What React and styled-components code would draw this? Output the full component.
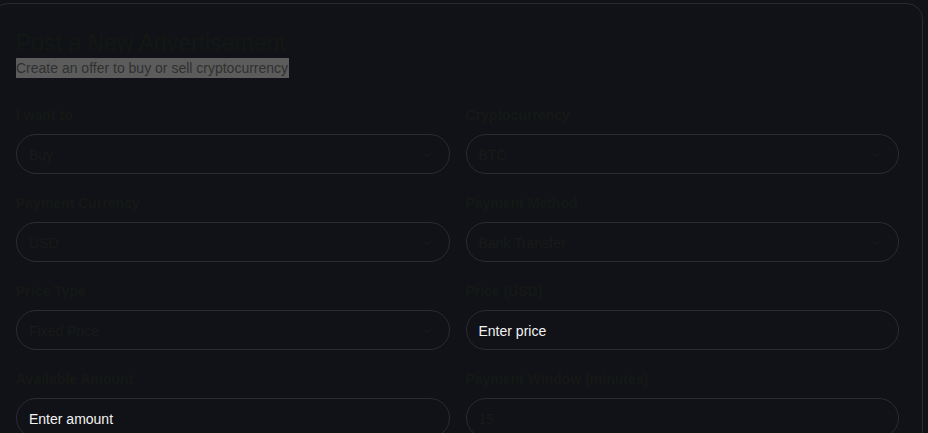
import React from 'react';
import styled, { createGlobalStyle } from 'styled-components';

const GlobalStyle = createGlobalStyle`
    html, body {
        margin: 0;
        padding: 0;
        background: #111217;
        overflow: hidden;
    }
    body {
        font-family: "Liberation Sans", Arial, sans-serif;
    }
`;

const Card = styled.div`
    margin: 3px 5px 0 -8px;
    padding: 24px 23px 24px 23px;
    border: 1px solid #2a2b30;
    border-radius: 16px;
    background: #111217;
    min-height: 600px;
`;

const Title = styled.h1`
    margin: 0;
    font-size: 23px;
    font-weight: 400;
    line-height: 30px;
    color: #131813;
`;

const Subtitle = styled.p`
    margin: 0;
    font-size: 14px;
    line-height: 20px;
`;

const Selected = styled.span`
    display: inline-block;
    background: #5c5c5c;
    color: #303030;
    line-height: 20px;
    padding-right: 1px;
`;

const Grid = styled.div`
    display: grid;
    grid-template-columns: 1fr 1fr;
    column-gap: 16px;
    row-gap: 21px;
    margin-top: 29px;
`;

const Field = styled.div`
    display: flex;
    flex-direction: column;
    gap: 10px;
`;

const Label = styled.label`
    font-size: 14px;
    font-weight: 700;
    line-height: 17px;
    color: #151915;
`;

const Box = styled.div`
    display: flex;
    align-items: center;
    justify-content: space-between;
    height: 40px;
    box-sizing: border-box;
    padding: 1px 16px 0 12px;
    border: 1px solid #2b2c31;
    border-radius: 20px;
    background: #111217;
    font-size: 14px;
    color: ${p => (p.$bright ? '#f2f2f2' : '#171b17')};
`;

const Chevron = () => (
    <svg width="12" height="12" viewBox="0 0 24 24" fill="none" stroke="#1a1d1c" strokeWidth="2" strokeLinecap="round" strokeLinejoin="round">
        <path d="m6 9 6 6 6-6" />
    </svg>
);

const fields = [
    { label: 'I want to', value: 'Buy', select: true },
    { label: 'Cryptocurrency', value: 'BTC', select: true },
    { label: 'Payment Currency', value: 'USD', select: true },
    { label: 'Payment Method', value: 'Bank Transfer', select: true },
    { label: 'Price Type', value: 'Fixed Price', select: true },
    { label: 'Price (USD)', value: 'Enter price', bright: true },
    { label: 'Available Amount', value: 'Enter amount', bright: true },
    { label: 'Payment Window (minutes)', value: '15' },
];

const App = () => (
    <>
        <GlobalStyle />
        <Card>
            <Title>Post a New Advertisement</Title>
            <Subtitle><Selected>Create an offer to buy or sell cryptocurrency</Selected></Subtitle>
            <Grid>
                {fields.map(f => (
                    <Field key={f.label}>
                        <Label>{f.label}</Label>
                        <Box $bright={f.bright}>
                            <span>{f.value}</span>
                            {f.select && <Chevron />}
                        </Box>
                    </Field>
                ))}
            </Grid>
        </Card>
    </>
);

export default App;
